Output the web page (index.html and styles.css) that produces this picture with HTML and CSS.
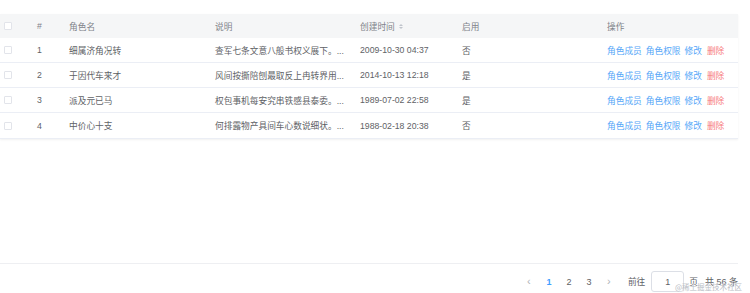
FILE: index.html
```html
<!DOCTYPE html>
<html lang="zh">
<head>
<meta charset="utf-8">
<link rel="stylesheet" href="styles.css">
</head>
<body>
<div class="page">
  <div class="table">
    <div class="row head">
      <div class="cell chk"><span class="box"></span></div>
      <div class="cell">#</div>
      <div class="cell">角色名</div>
      <div class="cell">说明</div>
      <div class="cell">创建时间 <span class="sort"><i class="up"></i><i class="down"></i></span></div>
      <div class="cell">启用</div>
      <div class="cell">操作</div>
    </div>
    <div class="row">
      <div class="cell chk"><span class="box"></span></div>
      <div class="cell">1</div>
      <div class="cell">细属济角况转</div>
      <div class="cell">查军七条文意八般书权义展下。...</div>
      <div class="cell">2009-10-30 04:37</div>
      <div class="cell">否</div>
      <div class="cell ops"><a class="lk">角色成员</a><a class="lk">角色权限</a><a class="lk">修改</a><a class="lk del">删除</a></div>
    </div>
    <div class="row">
      <div class="cell chk"><span class="box"></span></div>
      <div class="cell">2</div>
      <div class="cell">于因代车来才</div>
      <div class="cell">风间按撕陪刨最取反上冉转界用...</div>
      <div class="cell">2014-10-13 12:18</div>
      <div class="cell">是</div>
      <div class="cell ops"><a class="lk">角色成员</a><a class="lk">角色权限</a><a class="lk">修改</a><a class="lk del">删除</a></div>
    </div>
    <div class="row">
      <div class="cell chk"><span class="box"></span></div>
      <div class="cell">3</div>
      <div class="cell">派及元已马</div>
      <div class="cell">权包事机每安究串铁感县泰委。...</div>
      <div class="cell">1989-07-02 22:58</div>
      <div class="cell">是</div>
      <div class="cell ops"><a class="lk">角色成员</a><a class="lk">角色权限</a><a class="lk">修改</a><a class="lk del">删除</a></div>
    </div>
    <div class="row">
      <div class="cell chk"><span class="box"></span></div>
      <div class="cell">4</div>
      <div class="cell">中价心十支</div>
      <div class="cell">何排露物产具间车心数说细状。...</div>
      <div class="cell">1988-02-18 20:38</div>
      <div class="cell">否</div>
      <div class="cell ops"><a class="lk">角色成员</a><a class="lk">角色权限</a><a class="lk">修改</a><a class="lk del">删除</a></div>
    </div>
  </div>
  <div class="spacer"></div>
  <div class="footer">
    <div class="pager">
      <span class="nav">&lsaquo;</span>
      <span class="num active">1</span>
      <span class="num">2</span>
      <span class="num">3</span>
      <span class="nav">&rsaquo;</span>
      <span class="goto">前往</span>
      <span class="input">1</span>
      <span class="unit">页</span>
      <span class="total">共 56 条</span>
    </div>
    <span class="watermark">@稀土掘金技术社区</span>
  </div>
</div>
</body>
</html>
```
FILE: styles.css
```css
* { box-sizing: border-box; }
html, body { margin: 0; padding: 0; background: #fff; }
body {
  font-family: "Liberation Sans", "Noto Sans CJK SC", sans-serif;
  font-size: 8.7px;
  color: #606266;
  width: 750px;
  height: 293px;
  overflow: hidden;
}
.page {
  display: flex;
  flex-direction: column;
  height: 293px;
  padding-top: 14px;
  width: 738px;
}
.table {
  display: flex;
  flex-direction: column;
  border-bottom: 1px solid #ebeef5;
  box-shadow: 0 1px 2px rgba(0,0,0,0.06);
}
.row {
  display: grid;
  grid-template-columns: 29px 32px 146px 145px 102px 145px 139px;
  height: 25px;
  align-items: center;
  border-bottom: 1px solid #ebeef5;
}
.row:last-child { border-bottom: none; }
.row.head {
  height: 24px;
  background: #f5f6f7;
  color: #80838a;
  border-bottom: none;
}
.cell {
  padding-left: 8px;
  white-space: nowrap;
  display: flex;
  align-items: center;
}
.cell.chk { padding-left: 4px; }
.box {
  width: 8px;
  height: 8px;
  border: 1px solid #e2e4ea;
  border-radius: 1px;
  background: #fff;
  display: inline-block;
}
.sort {
  display: inline-flex;
  flex-direction: column;
  gap: 1px;
  margin-left: 4px;
}
.sort i {
  width: 0; height: 0;
  border-left: 2px solid transparent;
  border-right: 2px solid transparent;
}
.sort .up { border-bottom: 2.5px solid #c0c4cc; }
.sort .down { border-top: 2.5px solid #c0c4cc; }
.ops { gap: 4px; }
.lk { color: #54a6f8; }
.lk.del { color: #f77a7a; margin-left: 1px; }
.spacer { flex: 1; }
.footer {
  position: relative;
  height: 30px;
  border-top: 1px solid #eeeff2;
  display: flex;
  justify-content: flex-end;
  align-items: center;
  padding-top: 6px;
}
.pager {
  display: flex;
  align-items: center;
  color: #606266;
}
.nav { color: #b0b3b8; font-size: 11px; width: 20px; text-align: center; margin-top: -2px; }
.num { width: 20px; text-align: center; font-size: 9px; color: #606266; }
.num.active { color: #409eff; font-weight: bold; }
.goto { margin-left: 9px; }
.input {
  width: 33px;
  height: 21px;
  border: 1px solid #dcdfe6;
  border-radius: 3px;
  margin-left: 6px;
  display: flex;
  align-items: center;
  justify-content: center;
  font-size: 9px;
}
.unit { margin-left: 5px; }
.total { margin-left: 7px; font-size: 9px; }
.watermark {
  position: absolute;
  right: -4px;
  bottom: 1px;
  font-family: "Noto Sans CJK SC", sans-serif;
  font-size: 7.5px;
  color: #b8bcc4;
  text-shadow: 0 0 1px #fff;
}
```
